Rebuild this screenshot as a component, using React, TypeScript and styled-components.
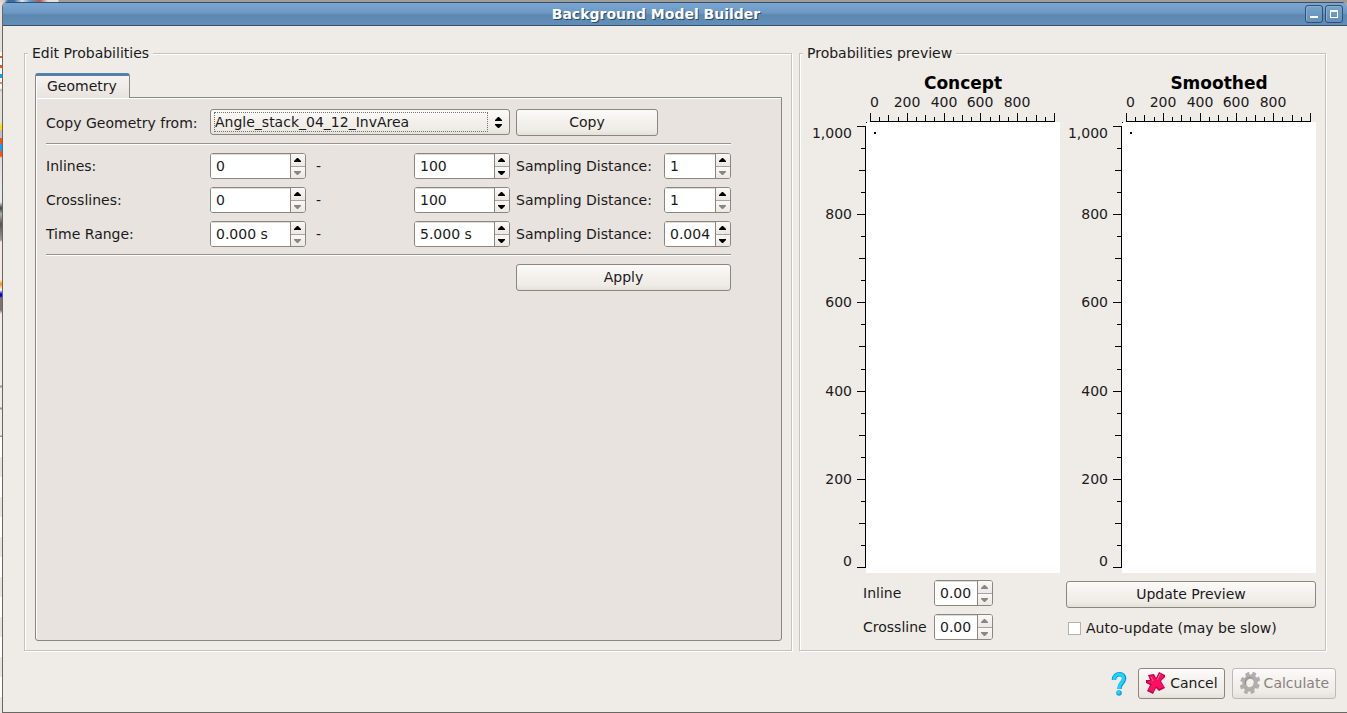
import React from "react";
import styled, { createGlobalStyle, css } from "styled-components";

const edge = "#8b8680";
const groove = "#c6c3be";
const face = "#efebe7";
const pane = "#e8e3df";
const buttonFill = "linear-gradient(#fcfbf9, #f4f1ed 45%, #efece7 80%, #e4e0d9)";

const Global = createGlobalStyle`
  * { box-sizing: border-box; }
  body { margin: 0; background: #a09c98; }
  body, button, input, select { font: 14px/18px "DejaVu Sans", sans-serif; color: #1a1a1a; }
`;

const Desktop = styled.div`
  display: grid;
  grid-template-columns: 2px minmax(0, 1fr);
  min-height: 100vh;
  padding-top: 2px;
  background: linear-gradient(90deg, #d9d4d0 4px, #3a6ea0 8px, #2f6fa8 14px, #e9e6e2 22px, #5a9ed0 30px, #b45a4a 40px, #e4e1dd 48px, #e4e1dd 58px, #a09c98 59px);
`;

const DesktopEdge = styled.div`
  background: linear-gradient(
    #e4e1dd 50px, #fff 50px 54px, #ff5014 54px 56px, #fff 56px 63px, #ff5014 63px 66px, #fff 66px 72px,
    #14a0ff 72px 76px, #fff 76px 80px, #ff8050 80px 82px, #fff 82px 86px, #b8b4b0 88px, #e4e1dd 90px 120px,
    #ffe000 124px 128px, #c8b8c8 128px 136px, #ff5014 136px 142px, #14a0ff 142px 148px, #ff5014 150px 154px,
    #ddd 156px, #e8e8f0 186px 200px, #404050 206px, #b0b0b0 212px, #555 222px, #999 238px, #f4e8e8 240px 278px,
    #ff9000 282px, #fff 288px, #0000e0 292px 294px, #807078 296px 308px, #f0eeec 312px 383px, #999 384px 385px,
    #efedea 386px 405px, #999 406px 407px, #efedea 408px 433px, #999 434px 435px, #fff 436px
  );
  display: flex;
`;

const Stripes = styled.div`
  flex: 1;
  margin-top: 435px;
  background: repeating-linear-gradient(#fff 0 20px, #e8e6e3 20px 40px);
`;

const Window = styled.main`
  display: flex;
  flex-direction: column;
  background: ${face};
  border-left: 1px solid #6a6763;
  border-bottom: 1px solid #6a6763;
  border-top-left-radius: 5px;
  border-top-right-radius: 5px;
  overflow: hidden;
`;

const TitleBar = styled.header`
  display: grid;
  grid-template-columns: minmax(0, 1fr) 42px;
  align-items: center;
  height: 24px;
  border-top: 1px solid #34506c;
  border-bottom: 1px solid #34506c;
  background: linear-gradient(#7aa6d0, #6c99c4 45%, #5c88ae 55%, #628fba);
`;

const Title = styled.h1`
  margin: 0;
  padding-left: 4px;
  text-align: center;
  font-size: 14px;
  line-height: 18px;
  font-weight: bold;
  color: #fff;
  text-shadow: 1px 1px 0 #2f4a66;
`;

const WindowButtons = styled.div`
  display: flex;
  gap: 2px;
`;

const WindowButton = styled.button`
  width: 18px;
  height: 18px;
  padding: 0;
  border: 1px solid #34506c;
  border-radius: 3px;
  background: linear-gradient(#76a2cc, #6390b8);
  box-shadow: inset 1px 1px 0 #86aed4;
  svg { display: block; }
`;

const Panels = styled.div`
  flex: 1;
  display: grid;
  grid-template-columns: minmax(748px, 1fr) 527px;
  gap: 7px;
  padding: 18px 21px 0 21px;
`;

const Group = styled.fieldset`
  display: flex;
  flex-direction: column;
  min-width: 0;
  margin: 0;
  padding: 11px 9px 9px 10px;
  border: 1px solid ${groove};
  box-shadow: inset 1px 1px 0 #fff, 1px 1px 0 #fff;
`;

const GroupTitle = styled.legend`
  margin-left: -7px;
  padding: 0 4px;
  background: ${face};
`;

const TabBar = styled.div`
  display: flex;
`;

const Tab = styled.button`
  position: relative;
  height: 25px;
  margin-bottom: -1px;
  padding: 0 12px 2px 11px;
  border: 1px solid ${edge};
  border-top: 3px solid #5580ac;
  border-bottom: 0;
  border-radius: 3px 3px 0 0;
  background: linear-gradient(#f6f3f0, ${pane});
  box-shadow: inset 1px 0 0 #fff;
`;

const TabPane = styled.section`
  flex: 1;
  padding: 11px 10px;
  border: 1px solid ${edge};
  border-radius: 0 0 3px 3px;
  background: ${pane};
  box-shadow: inset 1px 1px 0 #fff;
`;

const Form = styled.form`
  display: grid;
  grid-template-columns: 158px 96px 96px 96px 142px 67px;
  grid-template-rows: 27px 2px 27px 27px 27px 3px 27px;
  gap: 7px 6px;
  align-items: center;
  justify-content: start;
`;

const Rule = styled.hr`
  grid-column: 1 / -1;
  align-self: start;
  width: 100%;
  height: 2px;
  margin: 0;
  border: 0;
  border-top: 1px solid #97928d;
  background: #fff;
`;

const Dash = styled.span`
  padding-left: 4px;
`;

const Button = styled.button<{ $from?: number; $to?: number }>`
  height: 27px;
  padding: 0 8px 2px;
  border: 1px solid ${edge};
  border-radius: 3px;
  background: ${buttonFill};
  ${({ $from, $to }) => $from && css`grid-column: ${$from} / ${$to};`}
`;

const DialogButton = styled(Button)`
  display: flex;
  align-items: center;
  gap: 3px;
  height: 31px;
  padding: 0 6px 1px;
  &:disabled {
    color: #87837e;
    border-color: #bdb9b4;
  }
`;

const ComboFrame = styled.div`
  grid-column: 2 / 5;
  align-self: start;
  display: grid;
  height: 26px;
  border: 1px solid ${edge};
  border-radius: 3px;
  background: ${buttonFill};
  > * { grid-area: 1 / 1; }
  > svg { justify-self: end; align-self: center; margin-right: 7px; pointer-events: none; }
`;

const Combo = styled.select`
  appearance: none;
  align-self: center;
  height: 20px;
  margin: 0 21px 0 3px;
  padding: 0;
  border: 1px dotted #77736e;
  border-radius: 0;
  background: none;
  outline: 0;
`;

const SpinFrame = styled.div`
  align-self: end;
  display: grid;
  grid-template-columns: minmax(0, 1fr) 15px;
  height: 26px;
  border: 1px solid ${edge};
  border-radius: 3px;
  background: #fff;
  overflow: hidden;
`;

const SpinInput = styled.input`
  min-width: 0;
  padding: 0 0 0 5px;
  border: 0;
  outline: 0;
  background: #fff;
  box-shadow: inset 0 1px 0 #dedbd7;
`;

const Steps = styled.div`
  display: grid;
  grid-template-rows: 1fr 1fr;
  border-left: 1px solid ${edge};
`;

const Step = styled.button`
  display: grid;
  place-items: center start;
  padding: 0 0 0 3px;
  border: 0;
  background: linear-gradient(#faf8f6, #ece8e3);
  color: #000;
  & + & { border-top: 1px solid #a8a39d; }
  &:disabled { color: #8a8681; }
`;

const Charts = styled.div`
  display: grid;
  grid-template-columns: 1fr 1fr;
  gap: 6px;
`;

const Chart = styled.figure`
  margin: 0;
  svg { display: block; }
`;

const ChartTitle = styled.figcaption`
  padding: 0 0 2px 56px;
  text-align: center;
  font-size: 17px;
  font-weight: bold;
  line-height: 20px;
  color: #000;
`;

const PreviewControls = styled.div`
  display: grid;
  grid-template-columns: 1fr 1fr;
  gap: 6px;
  padding-top: 7px;
`;

const Position = styled.div`
  display: grid;
  grid-template-columns: 65px 59px;
  gap: 8px 6px;
  align-items: center;
  justify-content: start;
  padding-left: 53px;
`;

const UpdateColumn = styled.div`
  display: flex;
  flex-direction: column;
  gap: 11px;
  padding-top: 1px;
`;

const CheckLabel = styled.label`
  display: flex;
  align-items: center;
  gap: 5px;
  padding-left: 2px;
`;

const CheckBox = styled.input`
  appearance: none;
  width: 13px;
  height: 13px;
  margin: 0;
  border: 1px solid #b4b0ab;
  background: #fff;
`;

const Footer = styled.footer`
  display: flex;
  justify-content: flex-end;
  align-items: center;
  gap: 7px;
  padding: 17px 11px 13px;
`;

const HelpButton = styled.button`
  width: 24px;
  height: 28px;
  padding: 0;
  border: 0;
  background: none;
  svg { display: block; margin: auto; }
`;

function Arrow({ down = false }: { down?: boolean }) {
  return (
    <svg width="7" height="4" viewBox="0 0 7 4" aria-hidden="true">
      <path d={down ? "M0 0h7v1L4 4H3L0 1z" : "M3 0h1l3 3v1H0V3z"} fill="currentColor" />
    </svg>
  );
}

interface SpinProps {
  label: string;
  value: string;
  id?: string;
  upOff?: boolean;
  downOff?: boolean;
}

function Spin({ label, value, id, upOff, downOff }: SpinProps) {
  return (
    <SpinFrame>
      <SpinInput id={id} aria-label={id ? undefined : label} defaultValue={value} />
      <Steps>
        <Step type="button" aria-label={`Increase ${label}`} disabled={upOff}><Arrow /></Step>
        <Step type="button" aria-label={`Decrease ${label}`} disabled={downOff}><Arrow down /></Step>
      </Steps>
    </SpinFrame>
  );
}

const ranges = [
  { id: "inlines", name: "Inlines", from: "0", to: "100", step: "1", fixedStep: true },
  { id: "crosslines", name: "Crosslines", from: "0", to: "100", step: "1", fixedStep: true },
  { id: "time", name: "Time Range", from: "0.000 s", to: "5.000 s", step: "0.004", fixedStep: false },
];

const ticks = Array.from({ length: 21 }, (_, i) => i);
const tickLength = (i: number) => (i % 4 === 0 ? 8 : i % 2 === 0 ? 6 : 4);
const xTick = (i: number) => 60 + Math.round(i * 9.2);
const yTick = (i: number) => 472 - Math.round(i * 22.05);

function Preview({ title }: { title: string }) {
  return (
    <Chart>
      <ChartTitle>{title}</ChartTitle>
      <svg width="250" height="478" viewBox="0 0 250 478" role="img" aria-label={`${title} preview`}>
        <rect x="56" y="27" width="194" height="451" fill="#fff" />
        <g fill="#000" shapeRendering="crispEdges">
          <rect x="60" y="26" width="185" height="1" />
          <rect x="55" y="31" width="1" height="442" />
          <rect x="56" y="27" width="1" height="1" />
          <rect x="64" y="37" width="2" height="2" />
          {ticks.map((i) => (
            <React.Fragment key={i}>
              <rect x={xTick(i)} y={26 - tickLength(i)} width="1" height={tickLength(i)} />
              <rect x={55 - tickLength(i)} y={yTick(i)} width={tickLength(i)} height="1" />
            </React.Fragment>
          ))}
        </g>
        <g fontSize="14" fill="#1a1a1a">
          <text x="60" y="12">0</text>
          {[200, 400, 600, 800].map((v) => (
            <text key={v} x={xTick(v / 50)} y="12" textAnchor="middle">{v}</text>
          ))}
          <text x="42" y="43" textAnchor="end">1,000</text>
          {[800, 600, 400, 200].map((v) => (
            <text key={v} x="42" y={yTick(v / 50) + 5} textAnchor="end">{v}</text>
          ))}
          <text x="42" y="471" textAnchor="end">0</text>
        </g>
      </svg>
    </Chart>
  );
}

export default function App() {
  return (
    <>
      <Global />
      <Desktop>
        <DesktopEdge><Stripes /></DesktopEdge>
        <Window>
          <TitleBar>
            <Title>Background Model Builder</Title>
            <WindowButtons>
              <WindowButton aria-label="Minimize">
                <svg width="16" height="16"><rect x="4" y="10" width="8" height="2" fill="#fff" /></svg>
              </WindowButton>
              <WindowButton aria-label="Maximize">
                <svg width="16" height="16"><path d="M4 4h8v8H4zM5 6v5h6V6z" fill="#fff" fillRule="evenodd" /></svg>
              </WindowButton>
            </WindowButtons>
          </TitleBar>

          <Panels>
            <Group>
              <GroupTitle>Edit Probabilities</GroupTitle>
              <TabBar role="tablist">
                <Tab role="tab" aria-selected="true">Geometry</Tab>
              </TabBar>
              <TabPane role="tabpanel">
                <Form onSubmit={(e) => e.preventDefault()}>
                  <label htmlFor="source">Copy Geometry from:</label>
                  <ComboFrame>
                    <Combo id="source">
                      <option>Angle_stack_04_12_InvArea</option>
                    </Combo>
                    <svg width="7" height="11" aria-hidden="true">
                      <path d="M3 0h1l3 3v1H0V3zM0 7h7v1L4 11H3L0 8z" fill="#000" />
                    </svg>
                  </ComboFrame>
                  <Button type="button">Copy</Button>
                  <Rule />
                  {ranges.map((r) => (
                    <React.Fragment key={r.id}>
                      <label htmlFor={r.id}>{r.name}:</label>
                      <Spin id={r.id} label={`${r.name} start`} value={r.from} downOff />
                      <Dash>-</Dash>
                      <Spin label={`${r.name} end`} value={r.to} />
                      <label htmlFor={`${r.id}-step`}>Sampling Distance:</label>
                      <Spin id={`${r.id}-step`} label={`${r.name} sampling distance`} value={r.step} downOff={r.fixedStep} />
                    </React.Fragment>
                  ))}
                  <Rule />
                  <Button type="submit" $from={5} $to={7}>Apply</Button>
                </Form>
              </TabPane>
            </Group>

            <Group>
              <GroupTitle>Probabilities preview</GroupTitle>
              <Charts>
                <Preview title="Concept" />
                <Preview title="Smoothed" />
              </Charts>
              <PreviewControls>
                <Position>
                  <label htmlFor="inline">Inline</label>
                  <Spin id="inline" label="Inline" value="0.00" upOff downOff />
                  <label htmlFor="crossline">Crossline</label>
                  <Spin id="crossline" label="Crossline" value="0.00" upOff downOff />
                </Position>
                <UpdateColumn>
                  <Button type="button">Update Preview</Button>
                  <CheckLabel>
                    <CheckBox type="checkbox" />
                    Auto-update (may be slow)
                  </CheckLabel>
                </UpdateColumn>
              </PreviewControls>
            </Group>
          </Panels>

          <Footer>
            <HelpButton aria-label="Help">
              <svg width="16" height="24" viewBox="0 0 16 24" fill="none">
                <path d="M3 8C3 0.500 14 0.500 13 7C12.500 11 8.500 11 8.500 17" stroke="#1a8fd8" strokeWidth="4.500" />
                <path d="M3 8C3 0.500 13.500 0.500 12.500 7C12 11 8 11 8 17" stroke="#14d8ff" strokeWidth="3" />
                <circle cx="8" cy="21" r="2.800" fill="#1a9fe4" />
                <circle cx="7.500" cy="20.500" r="1.800" fill="#14d8ff" />
              </svg>
            </HelpButton>
            <DialogButton type="button">
              <svg width="22" height="24" viewBox="0 0 22 24">
                <path d="M3 4L9 3L11 7L14 1L20 4L20 6L16 10L20 17L14 20L11 17L8 23L2 20L5 14L1 12L1 9L5 9z" fill="#c2004a" />
                <path d="M4 5L8 4L11 9L15 2L19 5L15 10L19 16L14 18L11 15L8 21L3 19L7 13L2 11L7 9z" fill="#ff0f62" />
                <path d="M15 3L12 9M6 6L8 10" stroke="#ff6a98" />
              </svg>
              Cancel
            </DialogButton>
            <DialogButton type="button" disabled>
              <svg width="22" height="24" viewBox="0 0 22 24" fill="none">
                <g transform="translate(11 12) rotate(24) scale(0.850 1)">
                  <circle r="6.500" stroke="#b0aeac" strokeWidth="4.500" />
                  {[0, 45, 90, 135, 180, 225, 270, 315].map((angle) => (
                    <path key={angle} d="M0 -7V-11.500" stroke="#b0aeac" strokeWidth="4.500" transform={`rotate(${angle})`} />
                  ))}
                  <path d="M-4 3A4.500 4.500 0 0 1 1 -4.500" stroke="#8e8c8a" />
                </g>
              </svg>
              Calculate
            </DialogButton>
          </Footer>
        </Window>
      </Desktop>
    </>
  );
}
